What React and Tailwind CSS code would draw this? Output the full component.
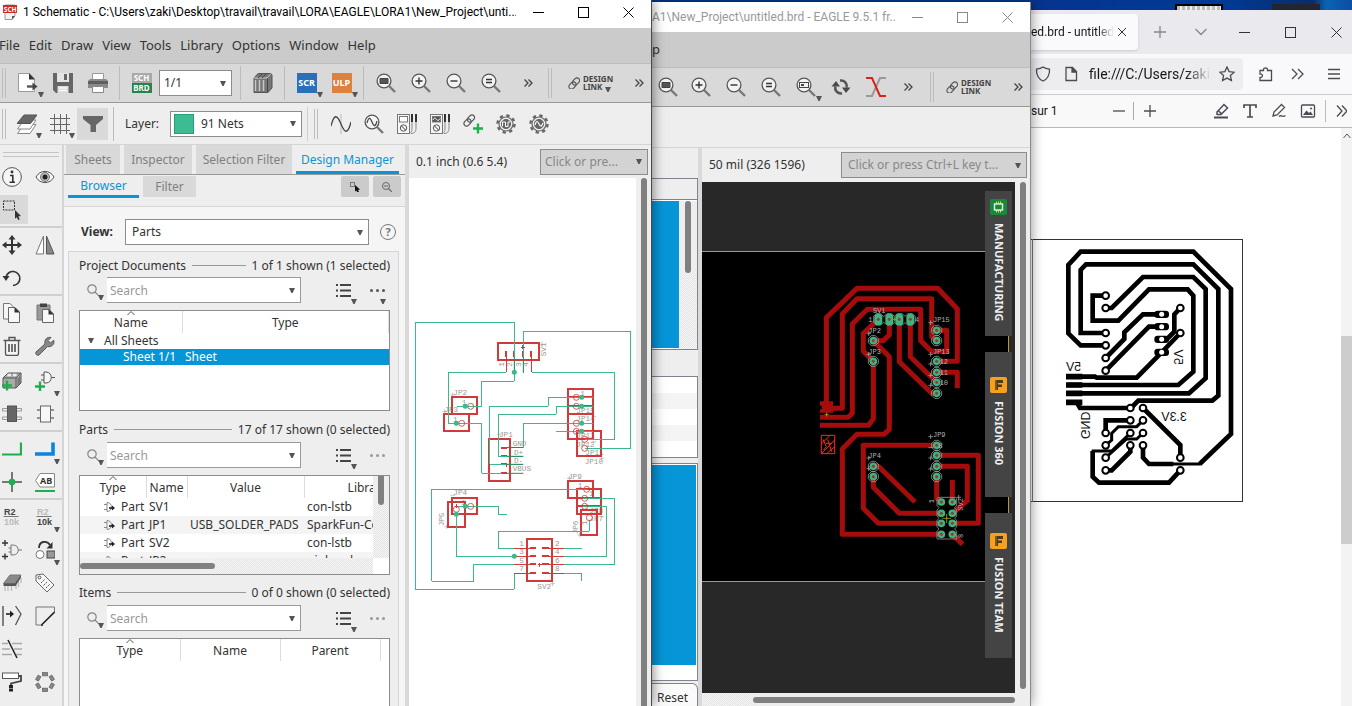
import React from "react";

/* ---------- shared bits ---------- */

const Caret = ({ className = "" }) => (
  <svg className={`pointer-events-none h-[5px] w-[6px] ${className}`} viewBox="0 0 6 5" aria-hidden="true">
    <path d="M0 0H6L3.6 5H2.4Z" fill="#555" />
  </svg>
);

const Ico = ({ children, size = "h-5 w-5", box = "0 0 20 20" }) => (
  <svg className={`${size} shrink-0`} viewBox={box} fill="none" stroke="#4a4a4a" strokeWidth="1" aria-hidden="true">
    {children}
  </svg>
);

const ToolButton = ({ label, drop, width = "w-[35px]", className = "", children }) => (
  <button type="button" aria-label={label} className={`relative flex h-8 shrink-0 items-center justify-center ${width} ${className}`}>
    {children}
    {drop && <Caret className="absolute bottom-0.5 right-px" />}
  </button>
);

const Sep = ({ className = "" }) => <span className={`h-[34px] w-px shrink-0 bg-[#bcbcbc] ${className}`} />;
const Grip = ({ className = "" }) => (
  <span className={`h-[30px] w-1 shrink-0 border-x border-[#bcbcbc] ${className}`} />
);

const Combo = ({ label, value, className = "", selectClass = "bg-white text-[#333]", swatch }) => (
  <div className={`relative flex items-center ${className}`}>
    <select
      aria-label={label}
      defaultValue={value}
      className={`h-[26px] w-full appearance-none truncate border border-[#8c8c8c] pr-4 text-[12px] outline-none ${selectClass}`}
    >
      <option>{value}</option>
    </select>
    {swatch && <span className="pointer-events-none absolute left-1 h-5 w-5 border border-[#22a077] bg-[#3dbb93]" />}
    <Caret className="absolute right-[6px]" />
  </div>
);

const WindowButtons = ({ color = "#000", width = "w-[45px]", names = ["Minimize", "Maximize", "Close"] }) => (
  <div className="flex shrink-0">
    {names.map((n, i) => (
      <button key={n} type="button" aria-label={n} className={`flex h-6 items-center justify-center ${width}`}>
        <svg className="h-[11px] w-[11px]" viewBox="0 0 11 11" fill="none" stroke={color} aria-hidden="true">
          {i === 0 && <path d="M0 5.5H11" />}
          {i === 1 && <rect x="0.5" y="0.5" width="10" height="10" />}
          {i === 2 && <path d="M0.5 0.5L10.5 10.5M10.5 0.5L0.5 10.5" />}
        </svg>
      </button>
    ))}
  </div>
);

const Zoom = ({ kind }) => (
  <Ico>
    <path d="M13 13L19 19" stroke="#777" strokeWidth="2.4" />
    <circle cx="8" cy="8" r="6.9" fill="#f3f3f3" stroke="#555" strokeWidth="1.3" />
    {kind === "fit" && <path d="M4 5.5H12V10.500H4Z" fill="#555" stroke="#444" />}
    {kind === "in" && <path d="M4.500 8H11.500M8 4.500V11.500" stroke="#333" strokeWidth="1.400" />}
    {kind === "out" && <path d="M4.500 8H11.500" stroke="#333" strokeWidth="1.400" />}
    {kind === "redraw" && <path d="M5 6.500H11M5 9.500H11" stroke="#333" strokeWidth="1.300" />}
    {kind === "select" && (
      <>
        <rect x="3.500" y="5.500" width="9" height="5" stroke="#444" />
        <rect x="5" y="7" width="3" height="2" fill="#444" stroke="none" />
      </>
    )}
    {kind === "sine" && <path d="M3 9C4.500 3 6 3 8 8S11.500 13 13 7" stroke="#444" strokeWidth="1.200" />}
  </Ico>
);

const More = ({ width = "w-5" }) => (
  <button type="button" aria-label="More tools" className={`flex h-8 shrink-0 items-center justify-center ${width}`}>
    <svg className="h-2 w-[9px]" viewBox="0 0 9 8" fill="none" stroke="#444" strokeWidth="1.300" aria-hidden="true">
      <path d="M0.500 0.500L4 4L0.500 7.500M4.500 0.500L8 4L4.500 7.500" />
    </svg>
  </button>
);

const ChainPath = () => (
  <g stroke="#555" strokeWidth="1.200">
    <rect x="-2.600" y="-4" width="5.200" height="8" rx="2.600" transform="translate(8 4.500) rotate(45)" />
    <rect x="-2.600" y="-4" width="5.200" height="8" rx="2.600" transform="translate(4.500 8.500) rotate(45)" />
  </g>
);

const DesignLink = ({ drop }) => (
  <button type="button" className="relative flex h-8 shrink-0 items-center gap-[3px] text-left text-[#444]">
    <Ico size="h-3 w-3" box="0 0 12 12">
      <ChainPath />
    </Ico>
    <span className="flex flex-col text-[8px] font-bold leading-[8px]">
      <span>DESIGN</span>
      <span>LINK</span>
    </span>
    {drop && <Caret className="absolute bottom-[7px] right-0.5" />}
  </button>
);

/* ---------- schematic window ---------- */

const MENU = ["File", "Edit", "Draw", "View", "Tools", "Library", "Options", "Window", "Help"];

const MainToolbar = () => (
  <div className="flex h-[39px] shrink-0 items-center border-b border-[#999] bg-[#d9d9d9]">
    <Grip className="ml-0.5" />
    <ToolButton label="New" drop className="ml-1">
      <Ico>
        <path d="M0.500 0.500H11L16.500 6V18.500H0.500Z" fill="#fff" stroke="#999" />
        <path d="M11 0L17 6.500H11Z" fill="#333" stroke="none" />
        <path d="M9 13.500H16" stroke="#555" strokeWidth="2.400" />
        <path d="M14.500 9.500L19.500 13.500L14.500 17.500Z" fill="#444" stroke="none" />
      </Ico>
    </ToolButton>
    <ToolButton label="Save">
      <Ico>
        <path d="M0 0H20V20H3L0 17Z" fill="#666" stroke="none" />
        <path d="M4 0H16V9H4Z" fill="#e4e4e4" stroke="none" />
        <path d="M11 1H14V7H11Z" fill="#666" stroke="none" />
        <path d="M4.500 13H15.500V20H4.500Z" fill="#ddd" stroke="none" />
        <path d="M6 15H14M6 17.500H14" stroke="#fff" />
      </Ico>
    </ToolButton>
    <ToolButton label="Print">
      <Ico>
        <path d="M4.500 0.500H15.500V8H4.500Z" fill="#fff" stroke="#999" />
        <path d="M2 6H18L20 8V15H0V8Z" fill="#8a8a8a" stroke="none" />
        <path d="M0 8H20V11H0Z" fill="#5f5f5f" stroke="none" />
        <path d="M4.500 13.500H15.500V19.500H4.500Z" fill="#fff" stroke="#888" />
      </Ico>
    </ToolButton>
    <Sep className="ml-1" />
    <ToolButton label="Switch to board" className="ml-1">
      <span className="flex w-5 flex-col text-center text-[8px] font-bold leading-[10px] text-white">
        <span className="bg-[#a9a9a9]">SCH</span>
        <span className="bg-[#26834a]">BRD</span>
      </span>
    </ToolButton>
    <Combo label="Sheet" value="1/1" className="w-[73px]" selectClass="bg-white pl-1 text-[#333]" />
    <Sep className="ml-2" />
    <ToolButton label="Library manager" className="ml-1">
      <Ico>
        <path d="M1 5L5 0.500H18L19 2V15L15 19.500H1Z" fill="#777" stroke="#555" />
        <path d="M1 5H14L18 0.500" stroke="#ccc" />
        <path d="M2.500 7V18M6.500 7V18M10.500 7V18" stroke="#c8c8c8" strokeWidth="1.500" />
        <path d="M14.500 5.500V19M5 5L9 1M9 5L13 1" stroke="#444" />
      </Ico>
    </ToolButton>
    <Sep className="ml-1" />
    <ToolButton label="Run script" drop className="ml-1">
      <span className="h-5 w-5 bg-[#2a6fb8] text-center text-[9px] font-bold leading-5 text-white">SCR</span>
    </ToolButton>
    <ToolButton label="Run ULP" drop>
      <span className="h-5 w-5 bg-[#dd8140] text-center text-[9px] font-bold leading-5 text-white">ULP</span>
    </ToolButton>
    <Sep className="ml-1" />
    <ToolButton label="Fit" className="ml-1">
      <Zoom kind="fit" />
    </ToolButton>
    <ToolButton label="Zoom in">
      <Zoom kind="in" />
    </ToolButton>
    <ToolButton label="Zoom out">
      <Zoom kind="out" />
    </ToolButton>
    <ToolButton label="Redraw">
      <Zoom kind="redraw" />
    </ToolButton>
    <More width="w-10" />
    <Grip />
    <span className="ml-4 flex flex-1 items-center justify-between pr-1">
      <DesignLink drop />
      <More width="w-4" />
    </span>
  </div>
);

const Gear = ({ square }) => (
  <Ico>
    <circle cx="10" cy="10" r="8.500" stroke="#666" strokeWidth="2.400" strokeDasharray="3.340 3.340" />
    <circle cx="10" cy="10" r="7" stroke="#666" strokeWidth="1.200" fill="#eee" />
    <circle cx="10" cy="10" r="4.600" fill="#666" stroke="#666" />
    {square ? (
      <path d="M6.500 12V8H9.500V12.500H12V8H14" stroke="#fff" />
    ) : (
      <path d="M6 11C7.500 6 8.500 7 10 10S12.500 13 14 9" stroke="#fff" strokeWidth="1.200" />
    )}
  </Ico>
);

const Meter = ({ dark }) => (
  <Ico>
    <rect x="0.500" y="0.500" width="12" height="19" fill="#f6f6f6" stroke="#777" />
    <rect x="2.500" y="2.500" width="8" height="5.500" fill={dark ? "#555" : "#fff"} stroke="#777" />
    {dark && <path d="M3 6C4.500 3 5.500 4 6.500 5.500S9 6.500 10 4.500" stroke="#fff" />}
    <circle cx="6.500" cy="14" r="3.200" stroke="#555" />
    <path d="M4.500 12L8.500 16" stroke="#333" />
    <path d="M15 0V8M19 0V8" stroke="#333" strokeWidth="2" />
    <path d="M15 8V14C15 18 14 19 12 19M19 8V14C19 18 17 19.500 14 19.500" stroke="#888" />
  </Ico>
);

const LayerToolbar = () => (
  <div className="flex h-[42px] shrink-0 items-center border-b border-[#d5d5d5] bg-[#eee]">
    <Grip className="ml-0.5" />
    <ToolButton label="Layer settings" drop width="w-[33px]" className="ml-1">
      <Ico>
        <path d="M7 10.500H19L13 19.500H0.500Z" fill="#fff" stroke="#888" />
        <path d="M7 6H19L13 15H0.500Z" fill="#fff" stroke="#888" />
        <path d="M7 1H20L13.500 9.500H0Z" fill="#666" stroke="#555" />
      </Ico>
    </ToolButton>
    <ToolButton label="Grid" drop width="w-[33px]">
      <Ico>
        <path d="M4.500 0V20M10.500 0V20M16.500 0V20M0 4.500H20M0 10.500H20M0 16.500H20" stroke="#666" />
      </Ico>
    </ToolButton>
    <ToolButton label="Filter" width="w-[31px]" className="ml-px bg-[#d9d9d9]">
      <Ico>
        <path d="M0 2H20V5L13 11V18H7.500V11L0 5Z" fill="#666" stroke="none" />
      </Ico>
    </ToolButton>
    <Sep className="ml-[5px]" />
    <span className="w-14 shrink-0 pl-[11px] text-[12px]">Layer:</span>
    <Combo label="Layer" value="91 Nets" swatch className="w-[132px]" selectClass="bg-white pl-[30px] text-[#333]" />
    <Sep className="ml-[5px] w-0.5 bg-[#d0d0d0]" />
    <Grip className="ml-1.5" />
    <ToolButton label="Simulate" width="w-[33px]" className="ml-1.5">
      <Ico>
        <path d="M10 0V20" stroke="#bbb" />
        <path d="M0 12C3 0 6 0 10 10S17 20 20 8" stroke="#444" strokeWidth="1.300" />
      </Ico>
    </ToolButton>
    <ToolButton label="Probe" width="w-[33px]">
      <Zoom kind="sine" />
    </ToolButton>
    <ToolButton label="Voltage meter" width="w-[33px]">
      <Meter />
    </ToolButton>
    <ToolButton label="Wave meter" width="w-[33px]">
      <Meter dark />
    </ToolButton>
    <ToolButton label="Add model" width="w-[33px]">
      <Ico>
        <ChainPath />
        <path d="M10 14.500H20M15 9.500V19.500" stroke="#1fae4d" strokeWidth="2.400" />
      </Ico>
    </ToolButton>
    <ToolButton label="Signal settings" width="w-[33px]">
      <Gear square />
    </ToolButton>
    <ToolButton label="Wave settings" width="w-[33px]">
      <Gear />
    </ToolButton>
  </div>
);

const GREEN = "#1fae4d";

const PALETTE = {
  Info: (
    <>
      <circle cx="10" cy="10" r="9.400" stroke="#555" fill="#f5f5f5" />
      <path d="M8 8.500H10.800V15M7.500 15.300H13" stroke="#333" strokeWidth="1.600" />
      <circle cx="10" cy="5" r="1.400" fill="#333" stroke="none" />
    </>
  ),
  Show: (
    <>
      <path d="M1 10C5 2.500 15 2.500 19 10C15 17.500 5 17.500 1 10Z" stroke="#555" fill="#f7f7f7" />
      <circle cx="10" cy="10" r="4.500" stroke="#777" fill="#bbb" />
      <circle cx="10" cy="10" r="2.500" fill="#222" stroke="none" />
    </>
  ),
  Group: (
    <>
      <rect x="1.500" y="1" width="11" height="9" strokeDasharray="2 1" stroke="#333" />
      <path d="M13 10L19 16L16.300 16.400L17.800 19.200L16.200 20L14.800 17.200L13 18.800Z" fill="#333" stroke="none" />
    </>
  ),
  Move: (
    <g fill="#333" stroke="none">
      <path d="M9 3H11V17H9ZM3 9H17V11H3Z" />
      <path d="M10 0L13.500 4.500H6.500ZM10 20L13.500 15.500H6.500ZM0 10L4.500 6.500V13.500ZM20 10L15.500 6.500V13.500Z" />
    </g>
  ),
  Mirror: (
    <>
      <path d="M8.500 1V19H1Z" fill="#fff" stroke="#777" />
      <path d="M11.500 1V19H19Z" fill="#888" stroke="#555" />
    </>
  ),
  Rotate: (
    <>
      <path d="M4 9A7 7 0 1 1 11 17.500" stroke="#333" strokeWidth="1.600" />
      <path d="M0.500 8H7.500L4 13Z" fill="#333" stroke="none" />
    </>
  ),
  Copy: (
    <>
      <path d="M1.500 0.500H8L12.500 5V16H1.500Z" fill="#f5f5f5" stroke="#777" />
      <path d="M6.500 4.500H13L17.500 9V19.500H6.500Z" fill="#f7f7f7" stroke="#666" />
      <path d="M12.500 4V9.500H18Z" fill="#333" stroke="none" />
    </>
  ),
  Paste: (
    <>
      <path d="M2 2H15V17H2Z" fill="#999" stroke="#777" />
      <path d="M5 0.500H12V4H5Z" fill="#444" stroke="none" />
      <path d="M7.500 6.500H14L18.500 11V19.500H7.500Z" fill="#f7f7f7" stroke="#666" />
      <path d="M13.500 6V11.500H19Z" fill="#333" stroke="none" />
    </>
  ),
  Delete: (
    <>
      <path d="M3.500 5V17.500C3.500 19 4.500 19.500 5.500 19.500H14.500C15.500 19.500 16.500 19 16.500 17.500V5" fill="#f5f5f5" stroke="#555" strokeWidth="1.300" />
      <path d="M1.500 4.500H18.500M7 4V1.500H13V4" stroke="#555" strokeWidth="1.400" />
      <path d="M7 8V16M10 8V16M13 8V16" stroke="#444" strokeWidth="1.500" />
    </>
  ),
  Change: (
    <path d="M1 16L10 8C9 4 12 0.500 16 1.500L13 4.500L15.500 7L18.700 4.200C20 8 16.500 11.500 12.500 10.500L4 19C2 20 0 18 1 16Z" fill="#888" stroke="#555" />
  ),
  "Add part": (
    <>
      <path d="M1 7L6 2H19V12L14 17H1Z" fill="#aaa" stroke="#555" />
      <path d="M1 7H14L19 2M14 7V17" stroke="#555" />
      <path d="M5.500 4H9M11 4H14.500" stroke="#eee" strokeWidth="2.500" />
      <path d="M15.500 15L18.500 12V4.500L15.500 7.500Z" fill="#777" stroke="none" />
      <path d="M0 14.500H10M5 9.500V19.500" stroke={GREEN} strokeWidth="2.400" />
    </>
  ),
  "Add gate": (
    <>
      <path d="M9 1H11C18 1 18 12 11 12H9ZM6 4H9M6 9H9M16.500 6.500H20" stroke="#555" fill="#f5f5f5" />
      <path d="M0 15.500H10M5 10.500V20" stroke={GREEN} strokeWidth="2.400" />
    </>
  ),
  Replace: (
    <>
      <path d="M0.500 4.500H6V7H0.500ZM0.500 13H6V15.500H0.500ZM14 4.500H19.500V7H14ZM14 13H19.500V15.500H14Z" stroke="#999" />
      <rect x="5.500" y="2" width="9" height="15.500" fill="#666" stroke="#555" />
    </>
  ),
  Device: (
    <>
      <path d="M2 6H6M2 14H6M15 6H19M15 14H19" stroke="#777" strokeWidth="1.600" />
      <rect x="5.500" y="2" width="10" height="16" fill="#f7f7f7" stroke="#666" />
    </>
  ),
  Net: <path d="M0 15.500H19V3.500" stroke={GREEN} strokeWidth="2.200" />,
  Bus: <path d="M0 15H18V3.500" stroke="#0d83dd" strokeWidth="3.600" />,
  Junction: (
    <>
      <path d="M10 0V20M0 10H20" stroke="#777" strokeWidth="2" />
      <circle cx="10" cy="10" r="3.300" fill={GREEN} stroke="none" />
    </>
  ),
  Label: (
    <>
      <path d="M5 1.500H19.500V15H5L0.500 8.500Z" fill="#fff" stroke="#888" />
      <text x="5" y="11.500" fontSize="9" fontWeight="bold" fill="#333" stroke="none">AB</text>
      <path d="M0 19H20" stroke={GREEN} strokeWidth="2" />
    </>
  ),
  Name: (
    <g fontFamily="Liberation Sans, Arial, sans-serif" fontSize="9" fontWeight="bold" stroke="none">
      <text x="2" y="8" fill="#444">R2</text>
      <text x="2" y="18" fill="#bbb">10k</text>
      <path d="M1.500 9.500H16.500" stroke="#777" />
    </g>
  ),
  Value: (
    <g fontFamily="Liberation Sans, Arial, sans-serif" fontSize="9" fontWeight="bold" stroke="none">
      <text x="2" y="8" fill="#bbb">R2</text>
      <text x="2" y="18" fill="#444">10k</text>
      <path d="M1.500 9.500H16.500" stroke="#777" />
    </g>
  ),
  Smash: (
    <>
      <path d="M0 3H6M3 0V6M0 16.500H6M3 13.500V19.500" stroke="#333" strokeWidth="1.400" />
      <path d="M9 5H11C18 5 18 15 11 15H9ZM6.500 8H9M6.500 12H9M16.500 10H20" stroke="#777" />
    </>
  ),
  Replicate: (
    <>
      <path d="M4 8C4 1 12 0 15 5" stroke="#333" strokeWidth="1.800" />
      <path d="M17.500 2V8.500H11.500Z" fill="#333" stroke="none" />
      <circle cx="5" cy="14.500" r="4" stroke="#777" fill="#fff" />
      <rect x="12" y="11" width="8" height="7" fill="#999" stroke="#445" />
    </>
  ),
  Invoke: (
    <>
      <path d="M3 13V18M6 13V18M9.500 13V18M14 11V16M16.500 8V14M19 5V10" stroke="#bbb" strokeWidth="1.300" />
      <path d="M8 2H19L13 10.500H1.500Z" fill="#8a8a8a" stroke="#777" />
      <path d="M1.500 10.500H13L19 2V4.500L13.500 13H1.500Z" fill="#555" stroke="none" />
    </>
  ),
  Attribute: (
    <>
      <path d="M1 2L8 1L19 12L12 19L1 8Z" fill="#f7f7f7" stroke="#666" />
      <circle cx="4.500" cy="4.500" r="1.400" stroke="#555" />
      <path d="M6 10L10 6M8.500 12.500L12.500 8.500M11 15L15 11" stroke="#555" strokeDasharray="2 1" />
    </>
  ),
  Miter: (
    <>
      <path d="M1 0V20" stroke="#444" strokeWidth="1.300" />
      <path d="M4 8H9" stroke="#222" strokeWidth="1.600" />
      <path d="M8 4.500L12 8L8 11.500Z" fill="#222" stroke="none" />
      <path d="M13.500 0L19 8L13.500 19" stroke="#555" strokeWidth="1.300" />
    </>
  ),
  Chamfer: (
    <>
      <path d="M1 19V1H19.500V6M1 19H7" stroke="#777" />
      <path d="M19.500 6L7 18.500V20" stroke="#222" strokeWidth="1.600" />
    </>
  ),
  Split: (
    <>
      <path d="M0 4.500H6M0 10H8M0 15.500H10M10 4.500H20M12 10H20M14 15.500H20" stroke="#aaa" strokeWidth="1.400" />
      <path d="M6 1L15 19" stroke="#222" strokeWidth="1.500" />
    </>
  ),
  Paint: (
    <>
      <rect x="0.500" y="1" width="16" height="5.500" fill="#fff" stroke="#555" />
      <path d="M17 4H19V9L9 11.500V13" stroke="#444" strokeWidth="1.800" />
      <path d="M9 13V20" stroke="#222" strokeWidth="4" strokeDasharray="3 0.600" />
    </>
  ),
  Array: (
    <g fill="#888" stroke="#666" strokeWidth="0.800">
      {[0, 60, 120, 180, 240, 300].map((a) => (
        <rect key={a} x="7.500" y="0.600" width="5" height="3.200" transform={`rotate(${a} 10 10)`} />
      ))}
    </g>
  ),
};

const PALETTE_GROUPS = [
  [["Info", "Show"], ["Group"]],
  [["Move", "Mirror"], ["Rotate"]],
  [["Copy", "Paste"], ["Delete", "Change"]],
  [["Add part", "Add gate"], ["Replace", "Device"]],
  [["Net", "Bus"], ["Junction", "Label"]],
  [["Name", "Value"], ["Smash", "Replicate"], ["Invoke", "Attribute"], ["Miter", "Chamfer"], ["Split"], ["Paint", "Array"]],
];
const PALETTE_DROPS = ["Add gate", "Bus", "Value", "Replicate"];

const Palette = () => (
  <nav aria-label="Tools" className="w-[62px] shrink-0 overflow-hidden bg-[#eee]">
    <div className="mx-[3px] mb-[3px] mt-[7px] h-[5px] border-y border-[#c4c4c4]" />
    {PALETTE_GROUPS.map((rows, g) => (
      <div key={g} className={g ? "border-t-2 border-[#d0d0d0]" : ""}>
        {rows.map((row) => (
          <div key={row[0]} className="flex h-[33px] items-center">
            {row.map((name, i) => (
              <button
                key={name}
                type="button"
                aria-label={name}
                className={`relative flex h-[29px] items-center justify-center ${i ? "w-[34px]" : "w-7 pr-1"} ${name === "Group" ? "bg-[#d9d9d9]" : ""}`}
              >
                <Ico>{PALETTE[name]}</Ico>
                {PALETTE_DROPS.includes(name) && <Caret className="absolute -bottom-px right-0.5" />}
              </button>
            ))}
          </div>
        ))}
      </div>
    ))}
  </nav>
);

const SortMark = () => (
  <svg className="absolute left-1/2 top-0 -ml-1 h-1 w-2" viewBox="0 0 8 4" fill="none" stroke="#555" aria-hidden="true">
    <path d="M0.500 4L4 0.500L7.500 4" />
  </svg>
);

const Th = ({ children, sorted, last }) => (
  <th scope="col" className={`relative h-[22px] p-0 pt-0.5 text-center font-normal ${last ? "" : "border-r border-[#ddd]"}`}>
    {sorted && <SortMark />}
    {children}
  </th>
);

const SectionHead = ({ title, count, className }) => (
  <div className={`flex items-center gap-1.5 ${className}`}>
    <h2 className="font-normal">{title}</h2>
    <span className="h-px flex-1 bg-[#999]" />
    <span>{count}</span>
  </div>
);

const SearchRow = ({ name, active }) => (
  <div className="mb-[7px] flex h-[26px] shrink-0 items-center">
    <button type="button" aria-label="Search options" className="relative flex h-6 w-7 items-center justify-center">
      <svg className="h-3 w-3" viewBox="0 0 12 12" fill="none" stroke="#888" strokeWidth="1.200" aria-hidden="true">
        <circle cx="5" cy="5" r="4.200" />
        <path d="M8 8L12 12" />
      </svg>
      <Caret className="absolute bottom-0.5 right-[3px]" />
    </button>
    <div className="relative flex flex-1 items-center">
      <input
        type="text"
        aria-label={`Search ${name}`}
        placeholder="Search"
        className="h-[26px] w-full min-w-0 border border-l-0 border-[#999] bg-white pl-[3px] text-[12px] outline-none placeholder:text-[#999]"
      />
      <Caret className="absolute right-[6px]" />
    </div>
    <button type="button" aria-label="View mode" className="relative ml-[35px] flex h-6 w-5 items-center">
      <svg className="h-[13px] w-[15px]" viewBox="0 0 15 13" fill="none" stroke="#444" strokeWidth="2" aria-hidden="true">
        <path d="M0 1H2M4 1H15M0 6.500H2M4 6.500H15M0 12H2M4 12H15" />
      </svg>
      <Caret className="absolute -bottom-0.5 -right-px" />
    </button>
    <button type="button" aria-label="More options" className="relative ml-3.5 flex h-6 w-5 items-center">
      <svg className="h-[3px] w-[15px]" viewBox="0 0 15 3" fill={active ? "#555" : "#999"} aria-hidden="true">
        <circle cx="1.500" cy="1.500" r="1.500" />
        <circle cx="7.500" cy="1.500" r="1.500" />
        <circle cx="13.500" cy="1.500" r="1.500" />
      </svg>
      {active && <Caret className="absolute -bottom-0.5 right-1" />}
    </button>
  </div>
);

const PARTS = [
  ["SV1", "", "con-lstb"],
  ["JP1", "USB_SOLDER_PADS", "SparkFun-Con"],
  ["SV2", "", "con-lstb"],
  ["JP2", "", "pinhead"],
];

const HATCH = "bg-[repeating-conic-gradient(#e2e2e2_0_25%,#f8f8f8_0_50%)] bg-[length:2px_2px]";

const DesignManager = () => (
  <aside className="flex w-[343px] shrink-0 flex-col border-l-2 border-[#d5d5d5] bg-[#eee] text-[12px] text-[#333]">
    <div className="flex h-[30px] shrink-0 items-end gap-1 border-b border-[#999] pl-0.5 text-[#808080]">
      <button type="button" className="h-[29px] w-[54px] bg-[#d9d9d9]">Sheets</button>
      <button type="button" className="h-[29px] w-[68px] bg-[#d9d9d9]">Inspector</button>
      <button type="button" className="h-[29px] w-24 whitespace-nowrap bg-[#d9d9d9]">Selection Filter</button>
      <button type="button" className="h-[29px] w-[103px] whitespace-nowrap border-b-[3px] border-[#0696d7] pt-[3px] text-[#0696d7]">Design Manager</button>
    </div>
    <div className="flex shrink-0 items-start gap-1 border-b border-[#d5d5d5] pb-2 pl-1 pr-1 pt-px">
      <button type="button" className="h-[22px] w-[71px] border-b-[3px] border-[#0696d7] text-[#0696d7]">Browser</button>
      <button type="button" className="h-[21px] w-[53px] bg-[#d9d9d9] text-[#808080]">Filter</button>
      <button type="button" aria-label="Select in drawing" className="ml-auto flex h-[21px] w-7 items-center justify-center rounded-xs bg-[#cbcbcb]">
        <svg className="h-2.5 w-2.5" viewBox="0 0 10 10" aria-hidden="true">
          <rect x="0.500" y="0.500" width="4" height="4" fill="none" stroke="#777" />
          <path d="M5 3L10 7.500L8 8L9 10H7L6.500 8.500L5 9.500Z" fill="#111" />
        </svg>
      </button>
      <button type="button" aria-label="Zoom to selection" className="flex h-[21px] w-7 items-center justify-center rounded-xs bg-[#cbcbcb]">
        <svg className="h-2.5 w-2.5" viewBox="0 0 10 10" fill="none" stroke="#666" aria-hidden="true">
          <circle cx="4" cy="4" r="3.500" />
          <path d="M6.500 6.500L10 10M2 4H6" strokeWidth="1.200" />
        </svg>
      </button>
    </div>
    <div className="flex min-h-0 flex-1 flex-col bg-[#f5f5f5] pl-1 pr-1.5 pt-3">
      <div className="mb-[6px] flex h-[26px] shrink-0 items-center pl-[13px]">
        <span className="w-11 font-bold">View:</span>
        <Combo label="View" value="Parts" className="flex-1" selectClass="bg-white pl-1.5 text-[#333]" />
        <button type="button" aria-label="Help" className="ml-[11px] mr-[3px] h-4 w-4 rounded-full border border-[#777] text-[11px] font-bold leading-[14px] text-[#777]">
          ?
        </button>
      </div>
      <div className="flex min-h-0 flex-1 flex-col border border-b-0 border-[#d5d5d5] bg-[#eee] pl-2.5 pr-2">
        <SectionHead title="Project Documents" count="1 of 1 shown (1 selected)" className="h-[25px] shrink-0 pt-0.5" />
        <SearchRow name="documents" active />
        <div className="h-[101px] shrink-0 border border-[#8c8c8c] bg-white">
          <table className="w-full table-fixed border-collapse">
            <colgroup>
              <col className="w-[102px]" />
              <col />
            </colgroup>
            <thead>
              <tr>
                <Th sorted>Name</Th>
                <Th>Type</Th>
              </tr>
            </thead>
            <tbody>
              <tr className="h-4 leading-4">
                <td className="whitespace-nowrap p-0 pl-2">
                  <Caret className="mr-[10px] inline-block align-[2px]" />
                  All Sheets
                </td>
                <td className="p-0" />
              </tr>
              <tr className="h-4 bg-[#0696d7] leading-4 text-white">
                <td className="whitespace-nowrap p-0 pl-[43px]">Sheet 1/1</td>
                <td className="p-0 pl-[3px]">Sheet</td>
              </tr>
            </tbody>
          </table>
        </div>
        <SectionHead title="Parts" count="17 of 17 shown (0 selected)" className="h-[31px] shrink-0 pt-[6px]" />
        <SearchRow name="parts" />
        <div className="grid h-[100px] shrink-0 grid-cols-[1fr_16px] grid-rows-[1fr_16px] border border-[#8c8c8c] bg-white">
          <div className="overflow-hidden">
            <table className="w-[350px] table-fixed border-collapse">
              <colgroup>
                <col className="w-[66px]" />
                <col className="w-[41px]" />
                <col className="w-[117px]" />
                <col />
              </colgroup>
              <thead>
                <tr>
                  <Th sorted>Type</Th>
                  <Th>Name</Th>
                  <Th>Value</Th>
                  <Th last>Library</Th>
                </tr>
              </thead>
              <tbody>
                {PARTS.map(([n, v, l]) => (
                  <tr key={n} className="h-[18px] leading-[18px] even:bg-[#f4f4f4]">
                    <td className="whitespace-nowrap p-0 pl-6">
                      <svg className="mr-[6px] inline-block h-2.5 w-[11px] align-[-1px]" viewBox="0 0 11 10" fill="none" stroke="#888" aria-hidden="true">
                        <path d="M0 2.500H3M0 7.500H3M3 0.500V9.500M3 0.500C9 0.500 9 9.500 3 9.500" />
                        <path d="M5 6H9" stroke="#222" strokeWidth="1.600" />
                        <path d="M8 3.500L11 6L8 8.500Z" fill="#222" stroke="none" />
                      </svg>
                      Part
                    </td>
                    <td className="p-0 pl-[3px]">{n}</td>
                    <td className="whitespace-nowrap p-0 pl-[3px]">{v}</td>
                    <td className="whitespace-nowrap p-0 pl-[3px]">{l}</td>
                  </tr>
                ))}
              </tbody>
            </table>
          </div>
          <div className={HATCH}>
            <div className="flex h-[29px] justify-center bg-[#eee]">
              <span className="w-1.5 rounded-b-full bg-[#808080]" />
            </div>
          </div>
          <div className={HATCH}>
            <div className="flex h-4 w-[135px] items-center bg-[#eee]">
              <span className="h-1.5 w-full rounded-full bg-[#808080]" />
            </div>
          </div>
        </div>
        <SectionHead title="Items" count="0 of 0 shown (0 selected)" className="h-[30px] shrink-0 pt-[5px]" />
        <SearchRow name="items" />
        <div className="min-h-[70px] flex-1 border border-b-0 border-[#8c8c8c] bg-white">
          <table className="w-full table-fixed border-collapse">
            <colgroup>
              <col className="w-[100px]" />
              <col className="w-[100px]" />
              <col className="w-[100px]" />
              <col />
            </colgroup>
            <thead>
              <tr>
                <Th sorted>Type</Th>
                <Th>Name</Th>
                <Th>Parent</Th>
                <td />
              </tr>
            </thead>
          </table>
        </div>
      </div>
    </div>
  </aside>
);

const NETS = [
  "M328 240V67H31V868H328V820H345",
  "M355 218V94H677V445H540",
  "M304 217H130V370H230V520H290",
  "M380 217H629V418H540",
  "M328 217V244H230V319H155",
  "M565 292H430V319H254V493H355",
  "M565 319H454V343H280V469H355",
  "M565 370H355V445",
  "M565 394H454",
  "M545 568H80V844H206V793H330",
  "M535 595H629V793H478",
  "M535 619H605V769H478",
  "M154 619H280V643H306",
  "M154 643V769H330",
  "M553 660V694H280V745H330",
  "M478 745H530",
  "M478 820H530V844",
];
const SYMBOLS = [
  [279, 129, 124, 52], [141, 291, 76, 51], [117, 342, 76, 51], [252, 417, 63, 126],
  [489, 267, 76, 51], [489, 343, 76, 73], [489, 292, 76, 51], [516, 393, 73, 75], [489, 543, 76, 51],
  [516, 567, 73, 51], [516, 595, 73, 47], [528, 630, 49, 75], [141, 594, 76, 48], [129, 606, 52, 75],
  [366, 717, 75, 126],
];
const PINS = [
  [197, 319], [170, 370], [514, 292], [514, 319], [514, 370], [514, 394], [539, 418], [539, 445],
  [545, 568], [539, 595], [539, 619], [553, 653], [197, 619], [154, 628],
];
const DOTS = [[328, 217], [181, 319], [154, 370], [530, 292], [530, 319], [530, 370], [530, 394], [181, 619], [154, 643], [328, 769]];
const SCH_LABELS = [
  [145, 284, "JP2"], [118, 336, "JP3"], [282, 412, "JP1"], [323, 438, "GND"], [327, 465, "D+"], [327, 489, "D-"],
  [323, 513, "VBUS"], [514, 339, "JP15"], [514, 364, "JP14"], [514, 414, "JP13"], [514, 441, "JP12"], [541, 466, "JP11"],
  [539, 491, "JP10"], [489, 536, "JP9"], [145, 584, "JP4"], [553, 640, "JP8"], [553, 662, "JP7"], [397, 866, "SV2"],
  [343, 738, "1"], [343, 763, "3"], [343, 789, "5"], [343, 813, "7"], [450, 738, "2"], [450, 763, "4"], [450, 789, "6"],
  [450, 813, "8"], [170, 315, "1"], [144, 365, "1"], [526, 287, "1"], [168, 616, "1"], [518, 563, "1"], [552, 589, "1"],
];
const SCH_VERTICAL = [[424, 169, "SV1"], [118, 679, "JP5"], [518, 703, "JP6"], [296, 200, "1"], [322, 200, "2"], [347, 200, "3"], [369, 200, "4"], [545, 676, "1"]];

const Schematic = () => (
  <svg className="h-[528px] w-[227px]" viewBox="409 178 227 528" role="img" aria-label="Circuit schematic">
    <g transform="translate(405 300) scale(0.33333)" fill="none">
      <g fill="#999" fontFamily="Liberation Mono, monospace" fontSize="23">
        {SCH_LABELS.map(([x, y, t], i) => (
          <text key={i} x={x} y={y}>{t}</text>
        ))}
        {SCH_VERTICAL.map(([x, y, t]) => (
          <text key={`${x}${y}`} transform={`translate(${x} ${y}) rotate(-90)`}>{t}</text>
        ))}
      </g>
      <path stroke="#aaa" strokeWidth="2" d="M136 285H150M143 278V292M112 335H126M119 328V342M276 403H290M404 133H418M411 126V140M486 535H500M493 528V542M136 586H150M118 680H132M125 673V687M517 705H531M524 698V712M436 851H450M443 844V858M583 475H597M590 468V482M560 350H574M560 425H574M583 650H597" />
      <g stroke="#d23a3a" strokeWidth="6" shapeRendering="crispEdges">
        {SYMBOLS.map(([x, y, w, h]) => (
          <rect key={`${x}-${y}`} x={x} y={y} width={w} height={h} />
        ))}
        <path d="M303 153V171M327 153V171M353 153V171M378 153V171M288 444H306M288 468H306M288 493H306M288 519H306" />
        <path d="M375 744H393M375 768H393M375 793H393M375 819H393M411 744H432M411 768H432M411 793H432M411 819H432" />
      </g>
      <g stroke="#3cb98c" strokeWidth="3" shapeRendering="crispEdges">
        {NETS.map((d) => (
          <path key={d} d={d} />
        ))}
      </g>
      <g stroke="#d23a3a" strokeWidth="3" shapeRendering="crispEdges">
        <path d="M304 171V216M380 171V216M306 444H355M328 745H375M328 769H375M328 793H375M328 820H375M432 745H478M432 769H478M432 793H478M432 820H478M347 142H360M353 136V148M398 794H410M404 788V800M304 493V500M149 619H160M154 612V625" />
      </g>
      <path d="M328 171V210M355 171V218M306 469H355M306 493H355M306 520H355" stroke="#2b8a5c" strokeWidth="3" />
      <g stroke="#d23a3a" strokeWidth="2.500">
        {PINS.map(([x, y]) => (
          <circle key={`${x}-${y}`} cx={x} cy={y} r="9" />
        ))}
      </g>
      <g fill="#3cb98c">
        {DOTS.map(([x, y]) => (
          <circle key={`${x}-${y}`} cx={x} cy={y} r="7.500" />
        ))}
      </g>
    </g>
  </svg>
);

const SchematicWindow = () => (
  <section aria-label="Schematic editor" className="relative z-20 flex min-h-0 flex-col border-r border-[#4a4a4a] bg-[#eee] text-[#333] shadow-[0_0_12px_rgba(0,0,0,0.55)]">
    <header className="flex h-7 shrink-0 items-center overflow-hidden bg-white pb-1 pl-[3px] text-black">
      <svg className="mr-[6px] h-4 w-3.5 shrink-0" viewBox="0 0 14 16" aria-hidden="true">
        <path d="M2 1H12V12L9 15.500H2Z" fill="#f2f2f2" stroke="#999" />
        <path d="M0 1H14V9H0Z" fill="#cf2a27" />
        <path d="M9 12H12L9 15.500Z" fill="#555" />
        <text x="0.800" y="7.600" fontSize="6.500" fontWeight="bold" fill="#fff">SCH</text>
      </svg>
      <h1 className="min-w-0 flex-1 overflow-hidden whitespace-nowrap font-['Roboto','Noto_Sans',sans-serif] text-[12px] font-normal">
        1 Schematic - C:\Users\zaki\Desktop\travail\travail\LORA\EAGLE\LORA1\New_Project\unti...
      </h1>
      <WindowButtons />
    </header>
    <nav aria-label="Menu" className="flex h-9 shrink-0 items-center border-b border-[#bdbdbd] bg-[#cbcbcb]">
      <ul className="-ml-px flex gap-[9px] text-[13px]">
        {MENU.map((m) => (
          <li key={m}>
            <button type="button">{m}</button>
          </li>
        ))}
      </ul>
    </nav>
    <MainToolbar />
    <LayerToolbar />
    <div className="flex min-h-0 flex-1">
      <Palette />
      <DesignManager />
      <div className="flex min-w-0 flex-1 flex-col border-l-4 border-[#d9d9d9]">
        <div className="flex h-[33px] shrink-0 items-center justify-between bg-[#eee] pl-[7px] pr-[3px]">
          <span className="text-[12px]">0.1 inch (0.6 5.4)</span>
          <Combo label="Command" value="Click or pre..." className="w-[108px]" selectClass="bg-[#d3d3d3] pl-1 text-[#888]" />
        </div>
        <div className="flex min-h-0 flex-1 overflow-hidden">
          <div className="flex-1 overflow-hidden bg-white">
            <Schematic />
          </div>
          <div className="flex w-[15px] justify-center bg-[#eee]">
            <span className="w-1.5 rounded-t-full bg-[#808080]" />
          </div>
        </div>
      </div>
    </div>
  </section>
);

/* ---------- board window ---------- */

const TRACES = [
  "M34 385V113L126 25H368L427 87V244H365",
  "M20 385H82V102L126 56H350V170L365 182",
  "M15 412H100L112 400V132L157 88H317V182L350 214H395V151H365",
  "M15 436H160L175 417V244",
  "M190 118L145 160V214L175 244",
  "M223 118V165L205 182H175L223 230V448L207 463H126L82 507V763H379",
  "M253 118V245L350 340H365",
  "M286 118V230L365 307",
  "M365 277H427V325",
  "M365 496H145V685L190 730H379",
  "M175 559H190L300 666",
  "M175 590V622L253 700H379",
  "M365 526H490V730H412",
  "M365 559H457V662L412 700",
  "M365 590V655L379 666",
  "M412 600V666",
  "M412 763L443 793",
];
const PADS = [[175, 182], [175, 244], [365, 151], [365, 182], [365, 244], [365, 277], [365, 307], [365, 340], [175, 559], [175, 590], [365, 496], [365, 526], [365, 559], [365, 590]];
const GRID_PADS = [[379, 666], [412, 666], [379, 700], [412, 700], [379, 730], [412, 730], [379, 763], [412, 763]];
const BRD_LABELS = [[174, 99, "SV1"], [160, 126, "1"], [300, 126, "4"], [160, 158, "JP2"], [160, 221, "JP3"], [354, 125, "JP15"], [354, 221, "JP13"], [374, 252, "12"], [374, 284, "11"], [374, 314, "10"], [354, 470, "JP9"], [370, 503, "8"], [160, 533, "JP4"]];

const Board = () => (
  <svg className="h-[511px] w-[313px]" viewBox="702 182 313 511" role="img" aria-label="Circuit board layout">
    <rect x="702" y="182" width="313" height="511" fill="#282828" />
    <rect x="702" y="251" width="307" height="330" fill="#000" />
    <path d="M702 251.500H1008.500V581.500H702" fill="none" stroke="#b9973a" shapeRendering="crispEdges" />
    <g transform="translate(815 280) scale(0.33333)" fill="none">
      <g stroke="#a50c0c" strokeWidth="15" strokeLinejoin="round">
        {TRACES.map((d) => (
          <path key={d} d={d} />
        ))}
      </g>
      <path d="M15 364H54V398H15V388H22V377H15Z" fill="#a50c0c" />
      <g stroke="#a9a9a9" strokeWidth="2.200">
        {PADS.map(([x, y]) => (
          <path key={`${x}-${y}`} d={`M${x - 6} ${y - 15}h12l9 9v12l-9 9h-12l-9 -9v-12z`} />
        ))}
        <path d="M176 109L184 101H196L206 110L216 101H230L238 109L247 101H262L270 109L278 101H292L301 110V126L292 135H278L270 128L262 135H247L238 128L230 135H216L206 127L196 135H184L176 127Z" />
        <path d="M371 652H422L425 656V676L419 683L425 690V708L419 715L425 722V740L419 747L425 754V777H366V754L372 747L366 740V722L372 715L366 708V690L372 683L366 676V656Z" />
        <path d="M154 161H168M161 154V168M154 223H168M161 216V230M340 128H354M347 121V135M340 223H354M347 216V230M340 252H354M347 245V259M340 286H354M347 279V293M340 316H354M347 309V323M340 470H354M347 463V477M340 503H354M340 534H354M347 527V541M340 567H354M347 560V574M154 534H168M161 527V541M154 566H168M161 559V573M424 652H438M431 645V659" />
      </g>
      <g fill="#3cb583">
        {[190, 223, 253, 286].map((x) => (
          <rect key={x} x={x - 12} y="101" width="24" height="35" rx="11" />
        ))}
        {[...PADS, ...GRID_PADS].map(([x, y]) => (
          <circle key={`${x}-${y}`} cx={x} cy={y} r="11.500" />
        ))}
      </g>
      {[...PADS, ...GRID_PADS, [190, 118], [223, 118], [253, 118], [286, 118]].map(([x, y]) => (
        <g key={`${x}-${y}`}>
          <circle cx={x} cy={y} r="4.500" fill="#4a6a40" />
          <path d={`M${x - 4.5} ${y}h9M${x} ${y - 4.5}v9`} stroke="#c02828" strokeWidth="3" />
        </g>
      ))}
      <path d="M232 118H246M239 111V125M29 403H41M35 397V409M382 715H408M395 702V729" stroke="#9fae18" strokeWidth="2.500" />
      <g fill="#b0b0b0" fontFamily="Liberation Mono, monospace" fontSize="21">
        {BRD_LABELS.map(([x, y, t]) => (
          <text key={`${x}-${y}`} x={x} y={y}>{t}</text>
        ))}
        <text transform="translate(357 670) rotate(-90)">1</text>
        <text transform="translate(443 692) rotate(-90)">SV2</text>
        <text transform="translate(443 774) rotate(-90)">8</text>
      </g>
      <path d="M19 466H59V521H19ZM19 492L45 466M19 521L59 480M35 521L59 500M24 478L34 500L26 510M38 478L50 515M32 490H50" stroke="#ff2a12" strokeWidth="3" />
    </g>
  </svg>
);

const SideTab = ({ label, children }) => (
  <button type="button" className="flex h-[145px] w-[27px] flex-col items-center justify-center gap-2 bg-[#444] pb-1.5">
    {children}
    <span className="text-[11px] font-bold text-[#eee] [writing-mode:vertical-rl]">{label}</span>
  </button>
);

const FusionMark = () => (
  <svg className="h-4 w-[17px]" viewBox="0 0 17 16" aria-hidden="true">
    <rect width="17" height="16" rx="2" fill="#f9a01b" />
    <path d="M5 3H13V6H8V7.500H12V10H8V13H5Z" fill="#4b3a1c" />
    <path d="M5 3H7V13H5Z" fill="#7a5a20" />
  </svg>
);

const BoardWindow = () => (
  <section aria-label="Board editor" className="relative z-10 mt-0.5 flex min-h-0 flex-col border-r border-[#8a8a8a] bg-[#eee] text-[#333] shadow-[0_0_12px_rgba(0,0,0,0.45)]">
    <header className="flex h-[30px] shrink-0 items-center bg-white text-[#999]">
      <h1 className="min-w-0 flex-1 overflow-hidden whitespace-nowrap font-['Roboto','Noto_Sans',sans-serif] text-[12px] font-normal">
        A1\New_Project\untitled.brd - EAGLE 9.5.1 fr...
      </h1>
      <WindowButtons color="#888" />
    </header>
    <nav aria-label="Board menu" className="flex h-9 shrink-0 items-center overflow-hidden border-b border-[#bdbdbd] bg-[#cbcbcb] text-[13px]">
      <button type="button" aria-label="Help">p</button>
    </nav>
    <div className="flex h-[39px] shrink-0 items-center border-b border-[#999] bg-[#d9d9d9]">
      <ToolButton label="Fit" width="w-[31px]"><Zoom kind="fit" /></ToolButton>
      <ToolButton label="Zoom in"><Zoom kind="in" /></ToolButton>
      <ToolButton label="Zoom out"><Zoom kind="out" /></ToolButton>
      <ToolButton label="Redraw"><Zoom kind="redraw" /></ToolButton>
      <ToolButton label="Zoom select" drop><Zoom kind="select" /></ToolButton>
      <ToolButton label="Refresh">
        <Ico>
          <path d="M11 16.500C6.500 17 3.500 13.500 4.300 9.500M9 3.500C13.500 3 16.500 6.500 15.700 10.500" stroke="#555" strokeWidth="2.600" />
          <path d="M5 4L9 9.500H0.500ZM15 16L11 10.500H19.500Z" fill="#4a4a4a" stroke="none" />
        </Ico>
      </ToolButton>
      <ToolButton label="Ratsnest">
        <Ico>
          <path d="M0 19H6L14 1H20" stroke="#999" strokeWidth="2" />
          <path d="M0 1H6L14 19H20" stroke="#d9221c" strokeWidth="2" />
        </Ico>
      </ToolButton>
      <More width="w-[30px]" />
      <Grip className="ml-[7px]" />
      <span className="ml-3 flex flex-1 items-center justify-between pr-1">
        <DesignLink />
        <More width="w-4" />
      </span>
    </div>
    <div className="h-[41px] shrink-0 border-b border-[#d5d5d5]" />
    <div className="flex min-h-0 flex-1">
      <div className="flex w-[46px] shrink-0 flex-col">
        <div className="mt-[30px] h-[172px] shrink-0 border-y border-r border-[#7e8490] bg-[#eee]">
          <div className="h-[21px] border-b border-[#7e8490]" />
          <div className="flex h-[149px] bg-white pt-px">
            <div className="h-[147px] w-[27px] bg-[#0696d7]" />
            <div className={`flex-1 ${HATCH}`}>
              <div className="flex h-[72px] justify-center bg-[#eee]">
                <span className="w-1.5 rounded-full bg-[#808080]" />
              </div>
            </div>
          </div>
        </div>
        <div className="mt-[26px] h-[82px] shrink-0 border-y border-r border-[#7e8490] bg-[repeating-linear-gradient(#fff_0_16px,#f4f4f4_16px_32px)] pt-px" />
        <div className="mt-[5px] h-[218px] shrink-0 border-y border-r border-[#7e8490] bg-white pr-px pt-px">
          <div className="h-[200px] bg-[#0696d7]" />
        </div>
        <button type="button" className="mt-0.5 h-[34px] shrink-0 rounded-r-md border border-l-0 border-[#7e8490] bg-[#fafafa] pb-1 pr-1 text-[12px]">
          Reset
        </button>
      </div>
      <div className="flex min-w-0 flex-1 flex-col border-l-4 border-[#d9d9d9]">
        <div className="flex h-[34px] shrink-0 items-center justify-between pl-[7px] pr-[3px]">
          <span className="text-[12px]">50 mil (326 1596)</span>
          <Combo label="Board command" value="Click or press Ctrl+L key t..." className="w-[186px]" selectClass="bg-[#d3d3d3] pl-1.5 text-[#888]" />
        </div>
        <div className="grid min-h-0 flex-1 grid-cols-[1fr_15px] grid-rows-[1fr_13px]">
          <div className="relative min-h-0 overflow-hidden bg-[#282828]">
            <Board />
            <div className="absolute right-[3px] top-[9px] flex flex-col gap-4">
              <SideTab label="MANUFACTURING">
                <svg className="h-4 w-[17px]" viewBox="0 0 17 16" aria-hidden="true">
                  <rect width="17" height="16" rx="2" fill="#16893f" />
                  <path d="M6.500 2.500V13.500M8.500 2.500V13.500M10.500 2.500V13.500" stroke="#e8d820" />
                  <rect x="4.500" y="5" width="8" height="6" fill="#16893f" stroke="#eee" strokeWidth="1.400" />
                </svg>
              </SideTab>
              <SideTab label="FUSION 360"><FusionMark /></SideTab>
              <SideTab label="FUSION TEAM"><FusionMark /></SideTab>
            </div>
          </div>
          <div className="flex justify-center pb-1">
            <span className="w-1.5 rounded-full bg-[#808080]" />
          </div>
          <div className={`flex items-center ${HATCH}`}>
            <span className="ml-[51px] flex h-full flex-1 items-center bg-[#eee]">
              <span className="h-1.5 w-full rounded-full bg-[#808080]" />
            </span>
          </div>
        </div>
      </div>
    </div>
  </section>
);

/* ---------- browser window ---------- */

const COPPER = [
  "M227 331H152L115 295V90L152 50H490L603 162V597L509 687",
  "M430 687H357L339 668V640",
  "M227 294H152V105L168 88H490L565 162V482L547 497H325L303 519",
  "M227 219H245L339 126H490L527 162V430L477 475H110",
  "M227 182H188V257H265L357 163H473L490 182V410L445 450H110",
  "M227 369L283 312V292L339 238H395",
  "M227 407L357 275H395",
  "M110 425H195L200 428H320L395 352L451 294",
  "M395 313H410L433 290V238L451 219",
  "M110 502H140L150 519H301",
  "M339 519L451 630V668",
  "M301 556H227V594",
  "M188 648V725L207 743H417L451 706",
  "M227 706H245L301 650V631",
];
const THIN_COPPER = [
  "M420 687H512",
  "M227 631L245 615V595L265 575H320L339 556",
  "M301 594L245 648H185",
  "M227 668L290 612H320L339 594",
];
const RINGS = [
  [227, 182], [227, 219], [227, 294], [227, 331], [227, 369], [227, 407], [451, 219], [451, 294],
  [301, 519], [339, 519], [301, 556], [339, 556], [301, 594], [339, 594], [301, 631], [339, 631],
  [227, 594], [227, 631], [227, 668], [227, 706], [451, 668], [451, 706],
];

const CopperPrint = () => (
  <svg className="h-[263px] w-[212px]" viewBox="1031 239 212 263" role="img" aria-label="Mirrored copper print">
    <path d="M1031 239.500H1242.500V501.500H1031" fill="none" stroke="#333" shapeRendering="crispEdges" />
    <path d="M1032.500 239V502" stroke="#777" shapeRendering="crispEdges" />
    <g transform="translate(1030 235) scale(0.33333)" fill="none" stroke="#000">
      <g strokeWidth="14">
        {COPPER.map((d) => (
          <path key={d} d={d} />
        ))}
      </g>
      <g strokeWidth="9">
        {THIN_COPPER.map((d) => (
          <path key={d} d={d} />
        ))}
      </g>
      <path d="M108 425H157M108 450H157M108 475H157M108 502H157" strokeWidth="17" />
      <g strokeWidth="6" fill="#fff">
        {RINGS.map(([x, y]) => (
          <circle key={`${x}-${y}`} cx={x} cy={y} r="10" />
        ))}
      </g>
      {[238, 275, 313, 352].map((y) => (
        <g key={y} stroke="none">
          <rect x="373" y={y - 11} width="44" height="22" rx="10" fill="#000" />
          <circle cx="395" cy={y} r="7.500" fill="#fff" />
        </g>
      ))}
      <g stroke="none" fill="#111" fontFamily="Liberation Sans, Arial, sans-serif" fontSize="37">
        <text transform="translate(153 408) scale(-1 1)">5V</text>
        <text transform="translate(470 558) scale(-1 1)">3.3V</text>
        <text transform="translate(153 612) scale(-1 1) rotate(-90)">GND</text>
        <text transform="translate(432 389) scale(-1 1) rotate(-90)">5V</text>
      </g>
    </g>
  </svg>
);

const NavIcon = ({ label, width = "w-8", className = "", children }) => (
  <button type="button" aria-label={label} className={`flex h-8 shrink-0 items-center justify-center ${width} ${className}`}>
    <svg className="h-4 w-4" viewBox="0 0 16 16" fill="none" stroke="#4b4b54" strokeWidth="1.300" aria-hidden="true">
      {children}
    </svg>
  </button>
);

const BrowserWindow = () => (
  <section aria-label="Browser" className="flex min-h-0 flex-col overflow-hidden font-['Roboto','Noto_Sans',sans-serif] text-[#15141a]">
    <div className="flex h-2.5 shrink-0 items-end bg-[linear-gradient(90deg,#06348f,#003a96_60%,#0a2c6a_88%,#0a63b4_92%,#0a4fa4)]">
      <span className="ml-[144px] h-1.5 w-12 border-2 border-b-0 border-black bg-[repeating-linear-gradient(90deg,#bbb_0_3px,#eee_3px_5px)]" />
      <span className="ml-[49px] h-1.5 w-12 bg-[#22262e]" />
    </div>
    <div className="flex h-11 shrink-0 items-center bg-[#e9e9ee]">
      <div className="flex h-9 w-[107px] shrink-0 items-center rounded-r bg-[#fafafc] shadow">
        <span className="w-[83px] overflow-hidden whitespace-nowrap text-[12px] [mask-image:linear-gradient(90deg,#000_80%,transparent)]">ed.brd - untitled</span>
        <button type="button" aria-label="Close tab" className="ml-1">
          <svg className="h-2 w-2" viewBox="0 0 8 8" stroke="#333" aria-hidden="true"><path d="M0 0L8 8M8 0L0 8" /></svg>
        </button>
      </div>
      <NavIcon label="New tab" width="w-[43px]"><path d="M8 2V14M2 8H14" stroke="#888" /></NavIcon>
      <NavIcon label="List tabs" width="w-10"><path d="M2.500 5L8 10.500L13.500 5" stroke="#888" /></NavIcon>
      <span className="flex-1" />
      <WindowButtons color="#333" width="w-[46px]" names={["Minimize browser", "Maximize browser", "Close browser"]} />
      <span className="-mr-[5px] w-0" />
    </div>
    <div className="flex h-[41px] shrink-0 items-center border-b border-[#ccc] bg-[#f9f9fb]">
      <div className="flex h-8 min-w-0 flex-1 items-center rounded-r bg-[#ededf0]">
        <NavIcon label="Tracking protection" width="w-6"><path d="M8 1C10 2.500 12.500 3 14.500 3.200C15 9 12 13.500 8 15C4 13.500 1 9 1.500 3.200C3.500 3 6 2.500 8 1Z" /></NavIcon>
        <NavIcon label="Local file" width="w-8">
          <path d="M3 1.500H9.500L13.500 5.500V14.500H3Z" />
          <path d="M9 1V6H14" fill="#4b4b54" />
        </NavIcon>
        <input
          type="text"
          aria-label="Address"
          defaultValue="file:///C:/Users/zaki/D"
          className="min-w-0 flex-1 bg-transparent pl-0.5 text-[14px] outline-none [mask-image:linear-gradient(90deg,#000_80%,transparent)]"
        />
        <NavIcon label="Bookmark"><path d="M8 1L10.100 5.600L15.200 6.200L11.400 9.600L12.400 14.600L8 12.100L3.600 14.600L4.600 9.600L0.800 6.200L5.900 5.600Z" /></NavIcon>
      </div>
      <NavIcon label="Extensions" width="w-[46px]"><path d="M2 6.500V4.500H5.500C5 1 10 1 9.500 4.500H13.500V14.500H2V11.500C5 12 5.500 7.500 2 8Z" /></NavIcon>
      <NavIcon label="More tools" width="w-[18px]"><path d="M2 3L7 8L2 13M8 3L13 8L8 13" /></NavIcon>
      <NavIcon label="Menu" width="w-9" className="ml-[9px]"><path d="M2 3.500H14M2 8H14M2 12.500H14" /></NavIcon>
    </div>
    <div className="flex h-[33px] shrink-0 items-center border-b border-[#b8b8b8] bg-[#f9f9fa] text-[12px]">
      <span>sur 1</span>
      <span className="flex-1" />
      <NavIcon label="Zoom out" width="w-7"><path d="M2 8H14" /></NavIcon>
      <span className="h-[18px] w-px bg-[#aaa]" />
      <NavIcon label="Zoom in" width="w-[31px]"><path d="M2 8H14M8 2V14" /></NavIcon>
      <span className="w-[41px]" />
      <NavIcon label="Highlight" width="w-[30px]">
        <path d="M4 12V9L11 1.500L14.500 5L8 11.500H4M5.500 8L9 11" strokeWidth="1.500" />
        <path d="M1 14.500H15" strokeWidth="2" />
      </NavIcon>
      <NavIcon label="Text" width="w-7"><path d="M2 5V2H14V5M8 2V14M5 14H11" strokeWidth="1.700" /></NavIcon>
      <NavIcon label="Draw" width="w-[30px]"><path d="M2 13L3 9L10.500 1.500L13.500 4.500L6 12ZM8 13.500C10 11 11 15 14.500 12.500" /></NavIcon>
      <NavIcon label="Image" width="w-7">
        <rect x="1.500" y="2" width="13" height="12" rx="1" />
        <path d="M3 12L6.500 7.500L9 10L10.500 8.500L13 12Z" fill="#4b4b54" stroke="none" />
        <circle cx="11" cy="5.500" r="1" fill="#4b4b54" stroke="none" />
      </NavIcon>
      <span className="ml-[3px] h-[22px] w-px bg-[#bbb]" />
      <NavIcon label="More PDF tools" width="w-[26px]"><path d="M6 2.500L11 8L6 13.500M11 2.500L16 8L11 13.500" /></NavIcon>
    </div>
    <div className="flex min-h-0 flex-1 bg-white">
      <div className="flex-1 overflow-hidden pt-[111px]">
        <CopperPrint />
      </div>
      <div className="flex w-[11px] flex-col items-center bg-[#f3f3f3]">
        <svg className="mt-1 h-2 w-2" viewBox="0 0 8 8" fill="none" stroke="#555" aria-hidden="true"><path d="M0.500 6L4 2L7.500 6" /></svg>
        <span className="mt-[196px] h-[208px] w-full bg-[#cdcdcd]" />
      </div>
    </div>
  </section>
);

export default function App() {
  return (
    <main className="grid h-screen grid-cols-[minmax(0,652fr)_minmax(0,379fr)_minmax(0,321fr)] grid-rows-1 overflow-hidden bg-[#003a96] font-['Noto_Sans','Open_Sans',sans-serif]">
      <SchematicWindow />
      <BoardWindow />
      <BrowserWindow />
    </main>
  );
}
